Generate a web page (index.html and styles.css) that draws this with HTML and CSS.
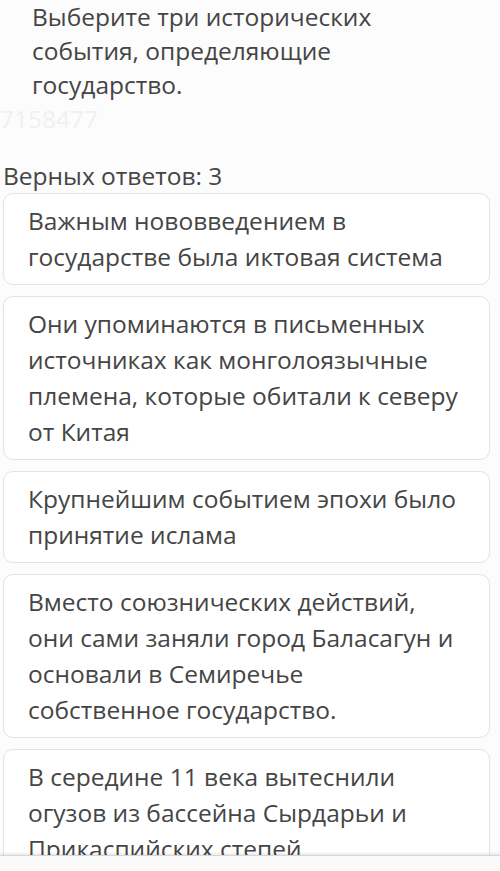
FILE: index.html
```html
<!DOCTYPE html>
<html>
  <head>
    <title>Вопрос</title>
    <link rel="stylesheet" href="styles.css">
  </head>
  <body>
    <div class="question">
      <div class="question-text">Выберите три исторических события, определяющие государство.</div>
      <div class="question-id">7158477</div>
      <div class="answers-count">Верных ответов: 3</div>
      <ul class="answers">
        <li class="answer">Важным нововведением в государстве была иктовая система</li>
        <li class="answer">Они упоминаются в письменных источниках как монголоязычные племена, которые обитали к северу от Китая</li>
        <li class="answer">Крупнейшим событием эпохи было принятие ислама</li>
        <li class="answer">Вместо союзнических действий, они сами заняли город Баласагун и основали в Семиречье собственное государство.</li>
        <li class="answer">В середине 11 века вытеснили огузов из бассейна Сырдарьи и Прикаспийских степей</li>
      </ul>
    </div>
    <div class="bottom-bar"></div>
  </body>
</html>
```

FILE: styles.css
```css
/* Page */
body {
  margin: 0;
  background-color: #fcfcfc;
  color: #454545;
  font-family: "Open Sans", "Liberation Sans", sans-serif;
  font-size: 24.5px;
  overflow: hidden;
}

.question {
  padding: 0 10px 0 3px;
}

.question-text {
  padding-left: 29px;
  line-height: 34px;
  width: 430px;
}

.question-id {
  color: #f0f0f0;
  line-height: 34px;
  margin-left: -3px;
}

.answers-count {
  margin-top: 23px;
  line-height: 34px;
}

/* Answers */
.answers {
  list-style: none;
  margin: 0;
  padding: 0;
  display: flex;
  flex-direction: column;
  gap: 11px;
}

.answer {
  background-color: #fff;
  border: 1px solid #e3e3e3;
  border-radius: 10px;
  padding: 9px 29px 9px 24px;
  line-height: 36px;
}

/* bottom strip over the list */
.bottom-bar {
  position: fixed;
  left: 0;
  right: 0;
  bottom: 0;
  height: 15px;
  background-color: #fafafa;
  border-top: 1px solid #d6d6d6;
  box-shadow: 0 -1px 3px rgba(0, 0, 0, 0.12);
}
```
